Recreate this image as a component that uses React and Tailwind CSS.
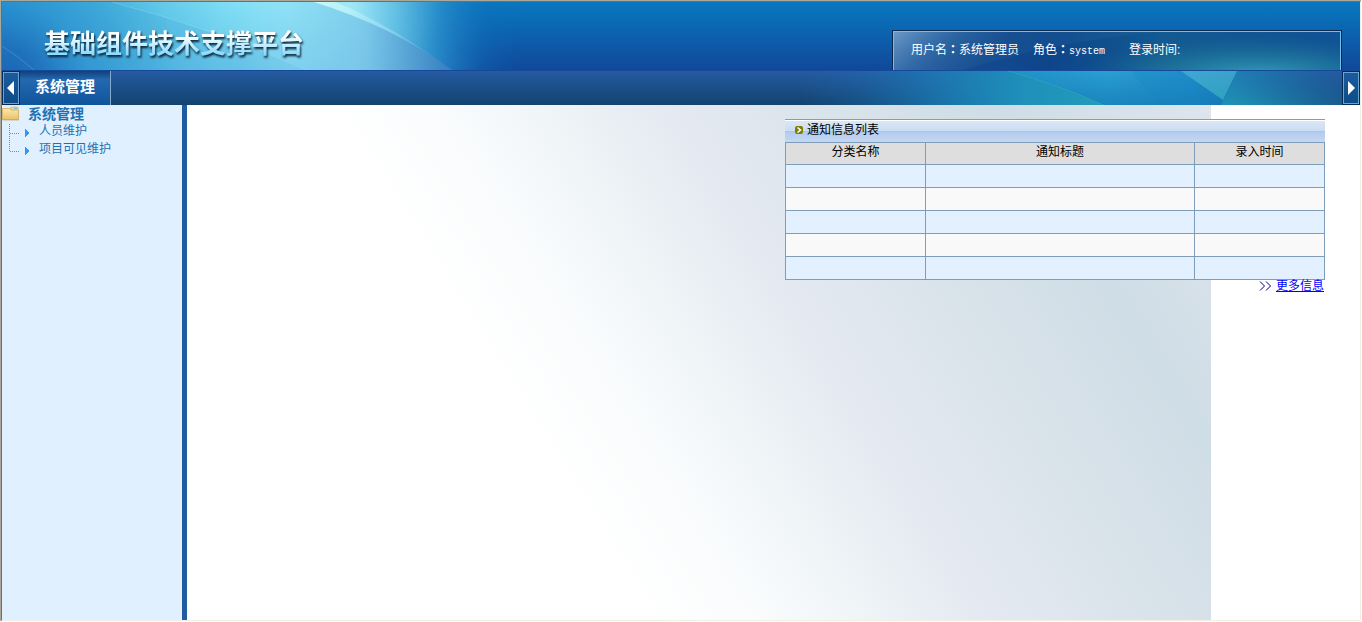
import React from "react";

function HeaderArt() {
  return (
    <svg className="absolute left-0 top-0 h-full w-[520px]" viewBox="0 0 520 68" preserveAspectRatio="none" aria-hidden="true">
      <defs>
        <linearGradient id="skyBase" x1="0" y1="0" x2="1" y2="0">
          <stop offset="0" stopColor="#2c9ad6" />
          <stop offset="0.2" stopColor="#4cb8e0" />
          <stop offset="0.42" stopColor="#7cdcf4" />
          <stop offset="0.55" stopColor="#92e6f8" />
          <stop offset="0.68" stopColor="#88def4" />
          <stop offset="0.76" stopColor="#58b8e0" />
          <stop offset="0.84" stopColor="#2a90cc" stopOpacity="0.85" />
          <stop offset="0.93" stopColor="#1272bc" stopOpacity="0.3" />
          <stop offset="1" stopColor="#0868b4" stopOpacity="0" />
        </linearGradient>
        <linearGradient id="skyDepth" x1="0" y1="0" x2="0" y2="1">
          <stop offset="0" stopColor="#1868b4" stopOpacity="0" />
          <stop offset="1" stopColor="#2a78c8" stopOpacity="0.2" />
        </linearGradient>
        <radialGradient id="cornerDepth" gradientUnits="userSpaceOnUse" cx="0" cy="90" r="180">
          <stop offset="0" stopColor="#124fa6" />
          <stop offset="0.25" stopColor="#1a62b2" stopOpacity="0.8" />
          <stop offset="0.5" stopColor="#2684c8" stopOpacity="0.35" />
          <stop offset="1" stopColor="#2a9ad6" stopOpacity="0" />
        </radialGradient>
        <linearGradient id="lower" x1="0" y1="0" x2="1" y2="0">
          <stop offset="0" stopColor="#8cdcf4" stopOpacity="0" />
          <stop offset="0.6" stopColor="#7cc4e8" stopOpacity="0.7" />
          <stop offset="1" stopColor="#3c80c0" stopOpacity="0.8" />
        </linearGradient>
        <radialGradient id="beam" gradientUnits="userSpaceOnUse" cx="345" cy="6" r="95">
          <stop offset="0" stopColor="#b4f0fa" stopOpacity="0.6" />
          <stop offset="0.5" stopColor="#7cd0ec" stopOpacity="0.3" />
          <stop offset="1" stopColor="#58b8e0" stopOpacity="0" />
        </radialGradient>
        <linearGradient id="beamEdge" x1="0" y1="0" x2="1" y2="0">
          <stop offset="0" stopColor="#dcfffc" stopOpacity="0.8" />
          <stop offset="0.6" stopColor="#a4e4f4" stopOpacity="0.4" />
          <stop offset="1" stopColor="#70b4e0" stopOpacity="0.05" />
        </linearGradient>
      </defs>
      <rect width="520" height="68" fill="url(#skyBase)" />
      <rect width="520" height="68" fill="url(#cornerDepth)" />
      <path d="M0 0H312Q390 24 450 68H0Z" fill="url(#skyDepth)" />
      <path d="M110 0Q210 26 304 68H0V0Z" fill="#1c88cc" fillOpacity="0.13" />
      <path d="M110 0Q210 26 304 68" fill="none" stroke="#a4e8f8" strokeOpacity="0.3" />
      <path d="M0 44Q16 54 32 68" fill="none" stroke="#62b4e6" strokeOpacity="0.4" />
      <path d="M240 0H312Q390 24 450 68H240Z" fill="url(#lower)" />
      <path d="M312 0Q390 24 450 68H520V0Z" fill="url(#beam)" />
      <path d="M312 0Q390 24 450 68Q392 25 334 0Z" fill="url(#beamEdge)" />
    </svg>
  );
}

function InfoArt() {
  return (
    <svg className="absolute inset-0 h-full w-full" viewBox="0 0 448 38" preserveAspectRatio="none" aria-hidden="true">
      <defs>
        <linearGradient id="infoBase" x1="0" y1="0" x2="1" y2="0">
          <stop offset="0" stopColor="#1c4f94" />
          <stop offset="0.35" stopColor="#0e458a" />
          <stop offset="0.6" stopColor="#125a92" />
          <stop offset="1" stopColor="#105296" />
        </linearGradient>
        <linearGradient id="infoGloss" gradientUnits="userSpaceOnUse" x1="0" y1="0" x2="50" y2="60">
          <stop offset="0" stopColor="#86b2d8" stopOpacity="0.75" />
          <stop offset="0.5" stopColor="#4c88bc" stopOpacity="0.45" />
          <stop offset="1" stopColor="#2a6ca4" stopOpacity="0.2" />
        </linearGradient>
        <radialGradient id="infoGlow" gradientUnits="userSpaceOnUse" cx="0" cy="0" r="1" gradientTransform="translate(365 44) scale(180 40)">
          <stop offset="0" stopColor="#38a4be" stopOpacity="0.95" />
          <stop offset="0.5" stopColor="#2484a0" stopOpacity="0.6" />
          <stop offset="1" stopColor="#1c6c90" stopOpacity="0" />
        </radialGradient>
      </defs>
      <rect width="448" height="38" fill="url(#infoBase)" />
      <path d="M0 0H260Q150 12 70 38H0Z" fill="url(#infoGloss)" />
      <rect width="448" height="38" fill="url(#infoGlow)" />
    </svg>
  );
}

function NavArt() {
  return (
    <svg className="absolute right-0 top-0 h-full w-[560px]" viewBox="0 0 560 34" preserveAspectRatio="none" aria-hidden="true">
      <defs>
        <linearGradient id="navBase" x1="0" y1="0" x2="1" y2="0">
          <stop offset="0" stopColor="#1c70b4" stopOpacity="0" />
          <stop offset="0.2" stopColor="#1c78b8" stopOpacity="0.5" />
          <stop offset="0.4" stopColor="#2294c8" />
          <stop offset="0.55" stopColor="#2a9ed2" />
          <stop offset="0.7" stopColor="#2490cc" />
          <stop offset="0.8" stopColor="#2080b8" stopOpacity="0.9" />
          <stop offset="1" stopColor="#1e5a9c" stopOpacity="0.1" />
        </linearGradient>
        <linearGradient id="navBeam" x1="0" y1="0" x2="1" y2="0">
          <stop offset="0" stopColor="#1c78b4" stopOpacity="0" />
          <stop offset="0.5" stopColor="#1a86b0" stopOpacity="0.5" />
          <stop offset="1" stopColor="#209cb4" stopOpacity="0.8" />
        </linearGradient>
        <linearGradient id="navDepth" x1="0" y1="0" x2="0" y2="1">
          <stop offset="0" stopColor="#0c70ac" stopOpacity="0" />
          <stop offset="1" stopColor="#0c70ac" stopOpacity="0.55" />
        </linearGradient>
        <linearGradient id="navRay" x1="0" y1="0" x2="0.3" y2="1">
          <stop offset="0" stopColor="#58b8d8" stopOpacity="0.55" />
          <stop offset="1" stopColor="#34acc4" stopOpacity="0.8" />
        </linearGradient>
        <linearGradient id="navTeal" x1="0" y1="1" x2="1" y2="0">
          <stop offset="0" stopColor="#1c9cb0" stopOpacity="0.75" />
          <stop offset="0.7" stopColor="#1c6ca4" stopOpacity="0.3" />
          <stop offset="1" stopColor="#1c5c9c" stopOpacity="0" />
        </linearGradient>
      </defs>
      <rect width="560" height="34" fill="url(#navBase)" />
      <path d="M60 0H208Q260 14 304 34H60Z" fill="url(#navBeam)" />
      <path d="M208 0Q260 14 304 34" fill="none" stroke="#58c8dc" strokeOpacity="0.25" />
      <path d="M208 0H437L423 34H304Q260 14 208 0Z" fill="url(#navDepth)" />
      <path d="M331 0H381L430 34H362Q344 18 331 0Z" fill="#1484c4" fillOpacity="0.25" />
      <path d="M381 0H437L423 29Z" fill="url(#navRay)" />
      <path d="M437 0L421 34H542V0Z" fill="url(#navTeal)" />
    </svg>
  );
}

function ScrollButton({ label, points }) {
  return (
    <button
      type="button"
      aria-label={label}
      className="relative flex w-[18px] shrink-0 items-center justify-center border border-[#062a55] bg-linear-to-b from-[#1c5c9e] to-[#0c4c88]"
    >
      <span className="flex h-full w-full items-center justify-center border border-[#6ba5cf]">
        <svg width="8" height="14" viewBox="0 0 8 14" aria-hidden="true">
          <polygon points={points} fill="#fff" />
        </svg>
      </span>
    </button>
  );
}

function Colon() {
  return <span className="font-['Noto_Sans_CJK_TC',sans-serif] font-bold">：</span>;
}

function Header() {
  return (
    <header>
      <div className="relative flex h-[69px] items-end justify-between border-b border-[#16489a] bg-linear-to-b from-[#0878c0] to-[#10489a] pr-[18px]">
        <HeaderArt />
        <h1 className="relative self-center bg-linear-to-b from-[#ffffff] from-50% to-[#8fdcff] to-85% bg-clip-text pl-[42px] pt-4 text-[26px] leading-8 font-bold text-transparent drop-shadow-[1px_2px_1px_#082030]">
          基础组件技术支撑平台
        </h1>
        <div className="relative h-10 w-[450px] border border-b-0 border-[#0a2a50]">
          <div className="relative flex h-full items-center border border-b-0 border-[#72c0ea] text-xs text-white">
            <InfoArt />
            <div className="relative flex items-baseline pb-0.5 pl-[17px]">
              <span>用户名<Colon />系统管理员</span>
              <span className="ml-3.5">
                角色<Colon /><span className="font-['Liberation_Mono',monospace] text-[10px]">system</span>
              </span>
              <span className="ml-6">登录时间:</span>
            </div>
          </div>
        </div>
      </div>
      <nav className="relative flex h-[34px] bg-linear-to-b from-[#255ba2] to-[#12436f]">
        <NavArt />
        <ScrollButton label="向左滚动" points="7,0 7,14 0,7" />
        <a
          href="#system"
          className="relative flex w-[91px] items-center justify-center border-r border-[#86a8cc] bg-linear-to-b from-[#123f7c] via-[#2468b0] via-25% to-[#0e559c] pb-0.5 text-[15px] font-bold text-white"
        >
          系统管理
        </a>
        <div className="flex-1" />
        <ScrollButton label="向右滚动" points="1,0 1,14 8,7" />
      </nav>
    </header>
  );
}

function FolderIcon() {
  return (
    <svg width="18" height="15" viewBox="0 0 18 15" aria-hidden="true">
      <defs>
        <linearGradient id="folder" x1="0" y1="0" x2="0" y2="1">
          <stop offset="0" stopColor="#fbe9b0" />
          <stop offset="1" stopColor="#e9c168" />
        </linearGradient>
      </defs>
      <path d="M8 3L9 1H15.5L16.5 3Z" fill="#f3e3b4" stroke="#cfae68" strokeWidth="0.7" />
      <path d="M12 1.6H15.4V2.8H12Z" fill="#58c4dc" />
      <path d="M0.5 2.5H7.5L9 4H16.5V13.5H0.5Z" fill="url(#folder)" stroke="#d3aa55" strokeWidth="0.8" />
      <path d="M0.5 14H17" stroke="#b99a5e" strokeOpacity="0.6" />
    </svg>
  );
}

function TreeBranch({ last }) {
  return (
    <svg className="mr-[9px] shrink-0" width="28" height="18" viewBox="0 0 28 18" shapeRendering="crispEdges" aria-hidden="true">
      <path d={last ? "M7.5 0V12" : "M7.5 2V18"} stroke="#7c8a98" strokeDasharray="1 1" />
      <path d="M8 11.5H18" stroke="#7c8a98" strokeDasharray="1 1" />
      <path d="M23 7L27 11L23 15Z" fill="#2f97fb" />
    </svg>
  );
}

const menuItems = ["人员维护", "项目可见维护"];

function Sidebar() {
  return (
    <aside className="w-[185px] shrink-0 border-r-[5px] border-[#205a9f] bg-[#e0f0ff] text-[#1f72b2]">
      <div className="flex h-[17px] items-center gap-2">
        <FolderIcon />
        <a href="#system" className="text-sm leading-4 font-bold">系统管理</a>
      </div>
      <ul>
        {menuItems.map((item, i) => (
          <li key={item} className="flex h-[18px] items-center">
            <TreeBranch last={i === menuItems.length - 1} />
            <a href="#item" className="text-xs leading-4">{item}</a>
          </li>
        ))}
      </ul>
    </aside>
  );
}

function NoticePanel() {
  const rows = [0, 1, 2, 3, 4];
  return (
    <section className="w-[540px] text-xs text-black">
      <div className="border-t border-[#7f9dbd]">
        <h2 className="flex h-[22px] items-center gap-1 border-t border-white bg-[linear-gradient(#dbe7f6,#cbdcf3_48%,#a9c5ea_48%,#b6cdef_58%,#c5d7f2)] pb-1 pl-2.5">
          <svg width="8" height="8" viewBox="0 0 8 8" aria-hidden="true">
            <rect width="8" height="8" rx="2" fill="#7f7f00" />
            <path d="M2.5 1.5L5.5 4L2.5 6.5" fill="none" stroke="#fff" strokeWidth="1.6" />
          </svg>
          通知信息列表
        </h2>
      </div>
      <table className="w-full table-fixed border-collapse">
        <colgroup>
          <col className="w-[140px]" />
          <col />
          <col className="w-[130px]" />
        </colgroup>
        <thead>
          <tr className="h-[22px] bg-[#dedede] leading-4">
            {["分类名称", "通知标题", "录入时间"].map((h) => (
              <th key={h} scope="col" className="border border-[#7f9db9] p-0 pb-1 font-normal">{h}</th>
            ))}
          </tr>
        </thead>
        <tbody>
          {rows.map((r) => (
            <tr key={r} className="h-[23px] odd:bg-[#e3f0ff] even:bg-[#f9f9f9]">
              <td className="border border-[#7f9db9]" />
              <td className="border border-[#7f9db9]" />
              <td className="border border-[#7f9db9]" />
            </tr>
          ))}
        </tbody>
      </table>
      <div className="flex items-center justify-end gap-1 pr-px leading-3 text-[#0000ff]">
        <svg width="13" height="10" viewBox="0 0 13 10" aria-hidden="true">
          <path d="M1 0.5L5.5 5L1 9.5M7 0.5L11.5 5L7 9.5" fill="none" stroke="#000080" />
        </svg>
        <a href="#more" className="underline">更多信息</a>
      </div>
    </section>
  );
}

export default function App() {
  return (
    <div className="flex min-h-screen flex-col bg-white pr-px pb-px font-['Liberation_Sans','Noto_Sans_CJK_SC',sans-serif]">
      <div className="flex flex-1 flex-col border-t border-l border-[#aca899]">
        <div className="flex flex-1 flex-col border border-t-[#716f64] border-r-[#f1efe2] border-b-[#f1efe2] border-l-[#716f64]">
          <Header />
          <div className="flex flex-1">
            <Sidebar />
            <main className="flex flex-1 items-start justify-end bg-[linear-gradient(58deg,#ffffff_34%,#fafcfd_42%,#f3f7fa_48%,#ebf1f4_53%,#e5eaf2_59%,#dbe4eb_70%,#cfdde6_84%,#dee5ec_100%)] bg-[length:1024px_100%] bg-no-repeat pt-3.5 pr-[35px]">
              <NoticePanel />
            </main>
          </div>
        </div>
      </div>
    </div>
  );
}
